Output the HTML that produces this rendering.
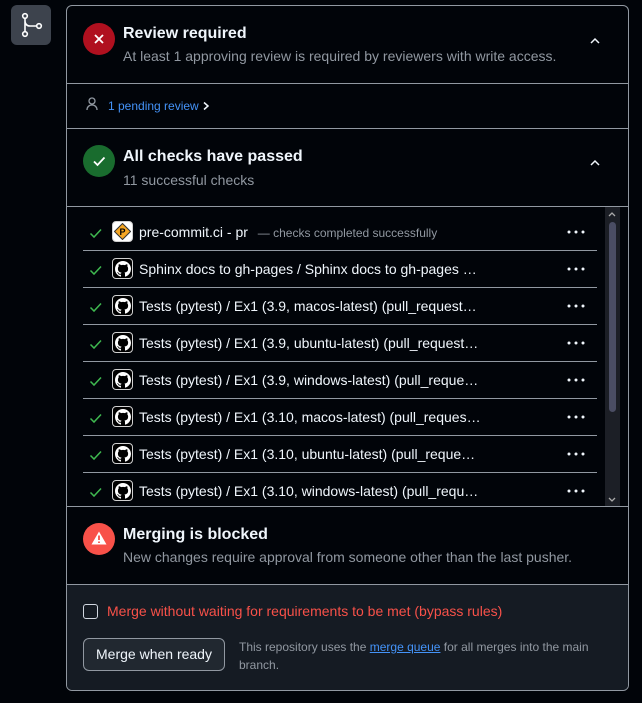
<!DOCTYPE html>
<html><head><meta charset="utf-8"><style>
*{box-sizing:border-box;margin:0;padding:0}
body{width:642px;height:703px;background:#010409;font-family:"Liberation Sans",sans-serif;color:#f0f6fc;position:relative;overflow:hidden}
.abs{position:absolute}
.side{left:11px;top:5px;width:40px;height:40px;background:#3d434d;border-radius:6px}
.box{left:66px;top:5px;width:563px;height:686px;border:1px solid #9198a1;border-radius:6px;overflow:hidden}
.hr{position:absolute;left:0;right:0;height:1px;background:#9198a1}
.circ{position:absolute;width:32px;height:32px;border-radius:50%}
.title{position:absolute;font-size:16px;font-weight:bold;color:#f0f6fc}
.sub{position:absolute;font-size:14px;color:#9198a1}
.row{position:absolute;left:16px;width:514px;height:37px}
.row .sep{position:absolute;left:0;right:0;bottom:0;height:1px;background:#9198a1}
.ck{position:absolute;left:6px;top:13px}
.ic{position:absolute;left:29px;top:7px;width:21px;height:21px;border:1px solid #d0d0d0;border-radius:4px;background:#000}
.ic svg{position:absolute;left:2px;top:2px}
.nm{position:absolute;left:56px;top:10px;font-size:14px;color:#f0f6fc;white-space:nowrap}
.dots{position:absolute;left:484px;top:16px}
</style></head><body>
<div class="abs side"><svg width="40" height="40" viewBox="0 0 40 40"><g fill="none" stroke="#fff" stroke-width="1.6"><circle cx="14" cy="11" r="2.3"/><circle cx="14" cy="29" r="2.3"/><circle cx="28" cy="21" r="2.3"/><path d="M14 13.3v13.4M14 16c0 3 2 5 5 5h6.7"/></g></svg></div>
<svg width="0" height="0" style="position:absolute"><defs><path id="gh" d="M8 0C3.58 0 0 3.58 0 8c0 3.54 2.29 6.53 5.470 7.59.4.07.55-.17.55-.38 0-.19-.01-.82-.01-1.49-2.010.37-2.530-.49-2.690-.94-.09-.23-.48-.94-.82-1.13-.28-.15-.68-.52-.01-.53.63-.01 1.080.58 1.230.82.72 1.210 1.870.87 2.330.66.07-.52.28-.87.51-1.07-1.780-.2-3.640-.89-3.640-3.950 0-.87.31-1.590.82-2.150-.08-.2-.36-1.020.08-2.120 0 0 .67-.21 2.200.82.64-.18 1.320-.27 2-.27.68 0 1.360.09 2 .27 1.530-1.040 2.200-.82 2.200-.82.44 1.100.16 1.920.08 2.120.51.56.82 1.270.82 2.150 0 3.070-1.870 3.750-3.650 3.950.29.25.54.73.54 1.480 0 1.070-.01 1.930-.01 2.200 0 .21.15.46.55.38A8.013 8.013 0 0016 8c0-4.420-3.580-8-8-8z" fill="#fff"/></defs></svg>
<div class="abs box">
 <div class="circ" style="left:16px;top:17px;background:#b0101f"><svg width="32" height="32"><path d="M12 12l8 8M20 12l-8 8" stroke="#fff" stroke-width="1.8"/></svg></div>
 <div class="title" style="left:56px;top:19px">Review required</div>
 <div class="sub" style="left:56px;top:42px">At least 1 approving review is required by reviewers with write access.</div>
 <svg class="abs" style="left:520px;top:27px" width="16" height="16"><path d="M4 10l4-4 4 4" fill="none" stroke="#f0f6fc" stroke-width="1.5"/></svg>
 <div class="hr" style="top:77px"></div>
 <svg class="abs" style="left:17px;top:90px" width="16" height="16"><g fill="none" stroke="#9198a1" stroke-width="1.3"><circle cx="8" cy="5" r="3"/><path d="M3 14c0-3 2-5 5-5s5 2 5 5"/></g></svg>
 <div class="abs" style="left:41px;top:93px;font-size:12px;color:#4493f8">1 pending review</div>
 <svg class="abs" style="left:134px;top:94px" width="10" height="12"><path d="M3 2.5l4 3.5-4 3.5" fill="none" stroke="#f0f6fc" stroke-width="1.5"/></svg>
 <div class="hr" style="top:122px"></div>
 <div class="circ" style="left:16px;top:139px;background:#196c2e"><svg width="32" height="32"><path d="M11 16.5l3.5 3.5 7-7.5" fill="none" stroke="#fff" stroke-width="1.8"/></svg></div>
 <div class="title" style="left:56px;top:142px">All checks have passed</div>
 <div class="sub" style="left:56px;top:166px">11 successful checks</div>
 <svg class="abs" style="left:520px;top:149px" width="16" height="16"><path d="M4 10l4-4 4 4" fill="none" stroke="#f0f6fc" stroke-width="1.5"/></svg>
 <div class="hr" style="top:200px"></div>
 <div class="abs" style="left:0;top:201px;width:561px;height:299px;overflow:hidden">
  <div class="row" style="top:7px"><svg class="ck" width="14" height="12"><path d="M1.5 6.5l3.5 3.5 7-7.5" fill="none" stroke="#3fb950" stroke-width="1.5"/></svg><div class="ic" style="background:#fff"><svg width="17" height="17" style="left:1px;top:1px"><path d="M8.5 0.5l8 8-8 8-8-8z" fill="#f5a623" stroke="#333" stroke-width="1"/><text x="8.5" y="12" font-size="9" font-weight="bold" text-anchor="middle" fill="#000" font-family="Liberation Sans">P</text></svg></div><div class="nm">pre-commit.ci - pr <span style="font-size:12px;color:#9198a1;margin-left:6px">— checks completed successfully</span></div><svg class="dots" width="18" height="4"><circle cx="2" cy="2" r="1.5" fill="#f0f6fc"/><circle cx="9" cy="2" r="1.5" fill="#f0f6fc"/><circle cx="16" cy="2" r="1.5" fill="#f0f6fc"/></svg><div class="sep"></div></div>
  <div class="row" style="top:44px"><svg class="ck" width="14" height="12"><path d="M1.5 6.5l3.5 3.5 7-7.5" fill="none" stroke="#3fb950" stroke-width="1.5"/></svg><div class="ic"><svg width="16" height="16"><use href="#gh"/></svg></div><div class="nm">Sphinx docs to gh-pages / Sphinx docs to gh-pages …</div><svg class="dots" width="18" height="4"><circle cx="2" cy="2" r="1.5" fill="#f0f6fc"/><circle cx="9" cy="2" r="1.5" fill="#f0f6fc"/><circle cx="16" cy="2" r="1.5" fill="#f0f6fc"/></svg><div class="sep"></div></div>
  <div class="row" style="top:81px"><svg class="ck" width="14" height="12"><path d="M1.5 6.5l3.5 3.5 7-7.5" fill="none" stroke="#3fb950" stroke-width="1.5"/></svg><div class="ic"><svg width="16" height="16"><use href="#gh"/></svg></div><div class="nm">Tests (pytest) / Ex1 (3.9, macos-latest) (pull_request…</div><svg class="dots" width="18" height="4"><circle cx="2" cy="2" r="1.5" fill="#f0f6fc"/><circle cx="9" cy="2" r="1.5" fill="#f0f6fc"/><circle cx="16" cy="2" r="1.5" fill="#f0f6fc"/></svg><div class="sep"></div></div>
  <div class="row" style="top:118px"><svg class="ck" width="14" height="12"><path d="M1.5 6.5l3.5 3.5 7-7.5" fill="none" stroke="#3fb950" stroke-width="1.5"/></svg><div class="ic"><svg width="16" height="16"><use href="#gh"/></svg></div><div class="nm">Tests (pytest) / Ex1 (3.9, ubuntu-latest) (pull_request…</div><svg class="dots" width="18" height="4"><circle cx="2" cy="2" r="1.5" fill="#f0f6fc"/><circle cx="9" cy="2" r="1.5" fill="#f0f6fc"/><circle cx="16" cy="2" r="1.5" fill="#f0f6fc"/></svg><div class="sep"></div></div>
  <div class="row" style="top:155px"><svg class="ck" width="14" height="12"><path d="M1.5 6.5l3.5 3.5 7-7.5" fill="none" stroke="#3fb950" stroke-width="1.5"/></svg><div class="ic"><svg width="16" height="16"><use href="#gh"/></svg></div><div class="nm">Tests (pytest) / Ex1 (3.9, windows-latest) (pull_reque…</div><svg class="dots" width="18" height="4"><circle cx="2" cy="2" r="1.5" fill="#f0f6fc"/><circle cx="9" cy="2" r="1.5" fill="#f0f6fc"/><circle cx="16" cy="2" r="1.5" fill="#f0f6fc"/></svg><div class="sep"></div></div>
  <div class="row" style="top:192px"><svg class="ck" width="14" height="12"><path d="M1.5 6.5l3.5 3.5 7-7.5" fill="none" stroke="#3fb950" stroke-width="1.5"/></svg><div class="ic"><svg width="16" height="16"><use href="#gh"/></svg></div><div class="nm">Tests (pytest) / Ex1 (3.10, macos-latest) (pull_reques…</div><svg class="dots" width="18" height="4"><circle cx="2" cy="2" r="1.5" fill="#f0f6fc"/><circle cx="9" cy="2" r="1.5" fill="#f0f6fc"/><circle cx="16" cy="2" r="1.5" fill="#f0f6fc"/></svg><div class="sep"></div></div>
  <div class="row" style="top:229px"><svg class="ck" width="14" height="12"><path d="M1.5 6.5l3.5 3.5 7-7.5" fill="none" stroke="#3fb950" stroke-width="1.5"/></svg><div class="ic"><svg width="16" height="16"><use href="#gh"/></svg></div><div class="nm">Tests (pytest) / Ex1 (3.10, ubuntu-latest) (pull_reque…</div><svg class="dots" width="18" height="4"><circle cx="2" cy="2" r="1.5" fill="#f0f6fc"/><circle cx="9" cy="2" r="1.5" fill="#f0f6fc"/><circle cx="16" cy="2" r="1.5" fill="#f0f6fc"/></svg><div class="sep"></div></div>
  <div class="row" style="top:266px"><svg class="ck" width="14" height="12"><path d="M1.5 6.5l3.5 3.5 7-7.5" fill="none" stroke="#3fb950" stroke-width="1.5"/></svg><div class="ic"><svg width="16" height="16"><use href="#gh"/></svg></div><div class="nm">Tests (pytest) / Ex1 (3.10, windows-latest) (pull_requ…</div><svg class="dots" width="18" height="4"><circle cx="2" cy="2" r="1.5" fill="#f0f6fc"/><circle cx="9" cy="2" r="1.5" fill="#f0f6fc"/><circle cx="16" cy="2" r="1.5" fill="#f0f6fc"/></svg><div class="sep"></div></div>
  <div class="abs" style="left:538px;top:0;width:15px;height:299px;background:#1c1f26"></div>
  <div class="abs" style="left:542px;top:15px;width:7px;height:190px;background:#4a4d63;border-radius:4px"></div>
  <svg class="abs" style="left:540px;top:3px" width="10" height="8"><path d="M2 6l3-3 3 3" fill="none" stroke="#aaa" stroke-width="1.3"/></svg>
  <svg class="abs" style="left:540px;top:289px" width="10" height="8"><path d="M2 2l3 3 3-3" fill="none" stroke="#aaa" stroke-width="1.3"/></svg>
 </div>
 <div class="hr" style="top:500px"></div>
 <div class="circ" style="left:16px;top:517px;background:#f85149"><svg width="32" height="32"><path d="M16 8.5l7.5 13h-15z" fill="#fff"/><path d="M16 12.5v4.5M16 18.5v1.5" stroke="#f85149" stroke-width="1.8"/></svg></div>
 <div class="title" style="left:56px;top:520px">Merging is blocked</div>
 <div class="sub" style="left:56px;top:543px">New changes require approval from someone other than the last pusher.</div>
 <div class="hr" style="top:578px"></div>
 <div class="abs" style="left:0;top:579px;width:561px;height:106px;background:#151b23"></div>
 <div class="abs" style="left:16px;top:598px;width:15px;height:15px;border:1px solid #d1d7e0;border-radius:3px"></div>
 <div class="abs" style="left:40px;top:597px;font-size:14px;color:#f85149">Merge without waiting for requirements to be met (bypass rules)</div>
 <div class="abs" style="left:16px;top:632px;width:142px;height:33px;border:1px solid #9198a1;border-radius:6px;background:#212830;font-size:14px;color:#f0f6fc;text-align:center;line-height:31px">Merge when ready</div>
 <div class="abs" style="left:172px;top:632px;width:370px;font-size:12px;line-height:18px;color:#9198a1">This repository uses the <span style="color:#4493f8;text-decoration:underline">merge queue</span> for all merges into the main branch.</div>
</div>
</body></html>
